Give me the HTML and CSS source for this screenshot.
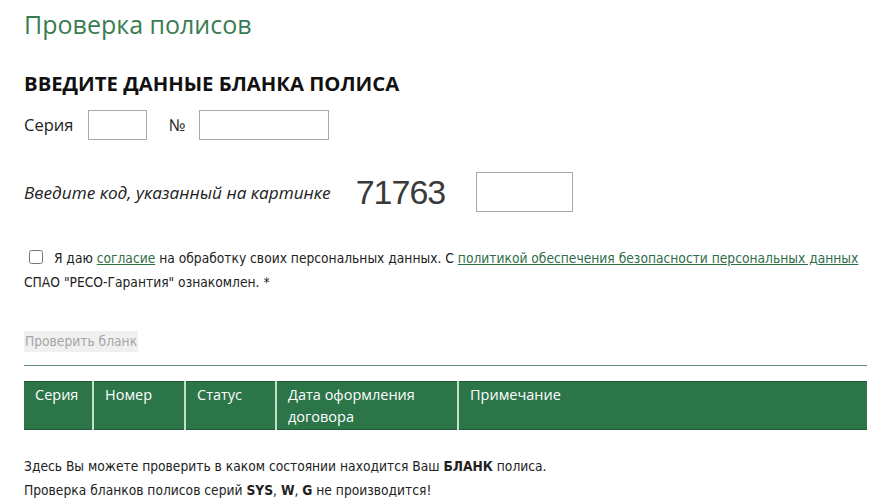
FILE: index.html
```html
<!DOCTYPE html>
<html lang="ru">
<head>
<meta charset="utf-8">
<title>Проверка полисов</title>
<link rel="stylesheet" href="styles.css">
</head>
<body>
<main class="page">
  <h1 class="title">Проверка полисов</h1>
  <h2 class="subtitle">ВВЕДИТЕ ДАННЫЕ БЛАНКА ПОЛИСА</h2>
  <div class="row-series">
    <label class="lbl">Серия</label>
    <input class="inp inp-series" type="text">
    <label class="lbl lbl-num">№</label>
    <input class="inp inp-number" type="text">
  </div>
  <div class="row-captcha">
    <span class="captcha-label">Введите код, указанный на картинке</span>
    <span class="captcha-img">71763</span>
    <input class="inp inp-captcha" type="text">
  </div>
  <div class="consent">
    <input class="chk" type="checkbox"> Я даю <a href="#">согласие</a> на обработку своих персональных данных. С <a href="#">политикой обеспечения безопасности персональных данных</a> СПАО "РЕСО-Гарантия" ознакомлен. *
  </div>
  <div class="btn-row"><button class="btn" disabled>Проверить бланк</button></div>
  <hr class="sep">
  <table class="results">
    <thead>
      <tr>
        <th class="c1">Серия</th>
        <th class="c2">Номер</th>
        <th class="c3">Статус</th>
        <th class="c4">Дата оформления договора</th>
        <th class="c5">Примечание</th>
      </tr>
    </thead>
  </table>
  <div class="notes">
    <p>Здесь Вы можете проверить в каком состоянии находится Ваш <b>БЛАНК</b> полиса.</p>
    <p>Проверка бланков полисов серий <b>SYS</b>, <b>W</b>, <b>G</b> не производится!</p>
  </div>
</main>
</body>
</html>
```
FILE: styles.css
```css
html, body {
  margin: 0;
  padding: 0;
  background: #fff;
}
.page {
  width: 843px;
  padding: 0 0 0 24px;
  font-family: "Open Sans", "Noto Sans", sans-serif;
  color: #222;
}
.title {
  margin: 7px 0 0;
  font-weight: 400;
  font-size: 25px;
  line-height: 34px;
  color: #3a7c52;
}
.subtitle {
  margin: 29px 0 0;
  font-size: 20.3px;
  line-height: 26px;
  font-weight: 700;
  color: #111;
}
.row-series {
  display: flex;
  align-items: center;
  margin-top: 13px;
  height: 31px;
}
.lbl {
  font-size: 16.5px;
  color: #222;
}
.inp {
  box-sizing: border-box;
  border: 1px solid #a9a9a9;
  background: #fff;
  margin: 0;
  padding: 0;
}
.inp-series {
  width: 59px;
  height: 30px;
  margin-left: 15px;
}
.lbl-num {
  margin-left: 21px;
}
.inp-number {
  width: 130px;
  height: 30px;
  margin-left: 14px;
}
.row-captcha {
  display: flex;
  align-items: center;
  margin-top: 32px;
  height: 40px;
}
.captcha-label {
  font-style: italic;
  font-size: 17.2px;
  color: #222;
}
.captcha-img {
  margin-left: 25px;
  font-family: "Liberation Sans", Arial, sans-serif;
  font-size: 34px;
  color: #3a3a3a;
  letter-spacing: -1px;
}
.inp-captcha {
  width: 97px;
  height: 40px;
  margin-left: 31px;
}
.consent {
  margin-top: 34px;
  font-family: "DejaVu Sans Condensed", "DejaVu Sans", sans-serif;
  font-size: 13.7px;
  line-height: 24px;
  color: #222;
}
.chk {
  margin: 0 7px 0 5px;
  width: 14px;
  height: 14px;
  vertical-align: -1px;
}
.consent a {
  color: #2e6e46;
  text-decoration: underline;
}
.btn-row {
  margin-top: 35px;
}
.btn {
  font-family: "DejaVu Sans Condensed", "DejaVu Sans", sans-serif;
  font-size: 13.7px;
  color: #a6a6a6;
  background: #f0f0f0;
  border: 0;
  padding: 0 1px;
  height: 21px;
  line-height: 21px;
}
.sep {
  margin: 13px 0 0;
  border: 0;
  border-top: 1px solid #5e8b72;
  height: 0;
}
.results {
  margin-top: 15px;
  width: 843px;
  border-collapse: collapse;
  background: #2b7548;
  border-top: 1px solid #1f5a37;
  border-bottom: 1px solid #1f5a37;
}
.results th {
  text-align: left;
  vertical-align: top;
  font-weight: 400;
  font-size: 14.5px;
  line-height: 22px;
  color: #fff;
  padding: 2px 10px 1px 11px;
  height: 45px;
  box-sizing: border-box;
  border-left: 2px solid #bfe0c9;
}
.results th.c1 { border-left: 0; width: 69px; }
.results th.c2 { width: 92px; }
.results th.c3 { width: 91px; }
.results th.c4 { width: 182px; }
.notes {
  margin-top: 24px;
  font-family: "DejaVu Sans Condensed", "DejaVu Sans", sans-serif;
  font-size: 13.7px;
  line-height: 24px;
  color: #222;
}
.notes p {
  margin: 0;
}
```
